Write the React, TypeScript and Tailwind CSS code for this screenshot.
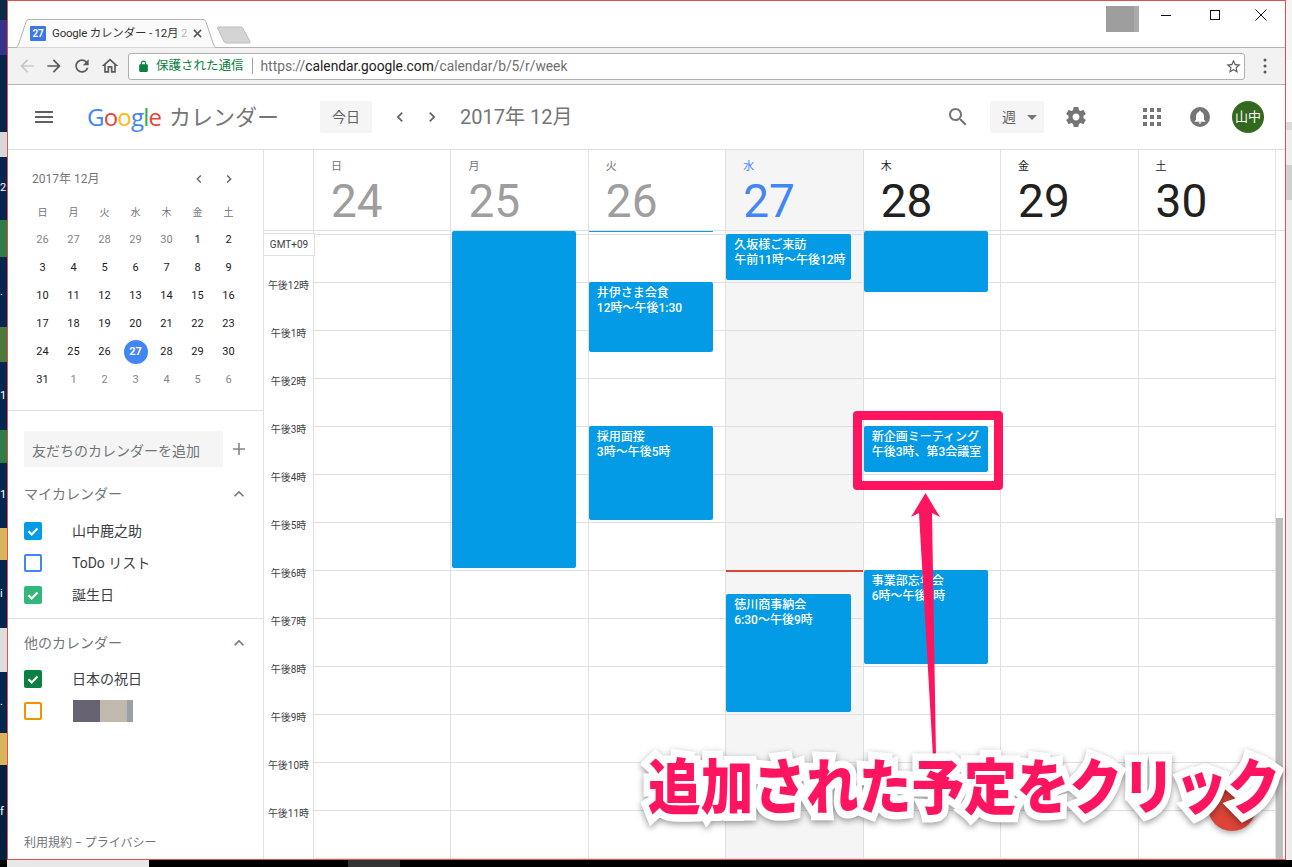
import React from 'react';

const desktopStrip = [
  { h: 20, bg: 'bg-[#0a2a4a]', t: '' },
  { h: 35, bg: 'bg-[#35338a]', t: '' },
  { h: 77, bg: 'bg-[#07244a]', t: '' },
  { h: 25, bg: 'bg-[#d8d8d8]', t: '' },
  { h: 63, bg: 'bg-[#06264f]', t: '2' },
  { h: 37, bg: 'bg-[#2e7d46]', t: '' },
  { h: 70, bg: 'bg-[#06264f]', t: '.' },
  { h: 35, bg: 'bg-[#4b7a3c]', t: '' },
  { h: 68, bg: 'bg-[#04264f]', t: '1' },
  { h: 33, bg: 'bg-[#2e7d46]', t: '' },
  { h: 65, bg: 'bg-[#04264f]', t: '1' },
  { h: 32, bg: 'bg-[#d8b45a]', t: '' },
  { h: 68, bg: 'bg-[#04264f]', t: 'i' },
  { h: 44, bg: 'bg-[#dddddd]', t: '' },
  { h: 61, bg: 'bg-[#04264f]', t: '.' },
  { h: 32, bg: 'bg-[#d8b45a]', t: '' },
  { h: 95, bg: 'bg-[#04203f]', t: 'f' },
];

const miniCal = [
  ['26', '27', '28', '29', '30', '1', '2'],
  ['3', '4', '5', '6', '7', '8', '9'],
  ['10', '11', '12', '13', '14', '15', '16'],
  ['17', '18', '19', '20', '21', '22', '23'],
  ['24', '25', '26', '27', '28', '29', '30'],
  ['31', '1', '2', '3', '4', '5', '6'],
];

const weekdays = ['日', '月', '火', '水', '木', '金', '土'];

const hours = ['午後12時', '午後1時', '午後2時', '午後3時', '午後4時', '午後5時', '午後6時', '午後7時', '午後8時', '午後9時', '午後10時', '午後11時'];

interface CalEvent {
  top: number;
  height: number;
  title?: string;
  time?: string;
}

const days: { wd: string; num: string; wdClass: string; numClass: string; bg: string; evClass: string; events: CalEvent[] }[] = [
  { wd: '日', num: '24', wdClass: 'text-[#70757a]', numClass: 'text-[#9e9e9e]', bg: 'bg-white', evClass: 'left-0 w-[124px]', events: [] },
  { wd: '月', num: '25', wdClass: 'text-[#70757a]', numClass: 'text-[#9e9e9e]', bg: 'bg-white', evClass: 'left-px w-[124px]', events: [{ top: 0, height: 337 }] },
  {
    wd: '火', num: '26', wdClass: 'text-[#70757a]', numClass: 'text-[#9e9e9e]', bg: 'bg-white', evClass: 'left-0 w-[124px]',
    events: [
      { top: 0, height: 1 },
      { top: 51, height: 70, title: '井伊さま会食', time: '12時〜午後1:30' },
      { top: 195, height: 94, title: '採用面接', time: '3時〜午後5時' },
    ],
  },
  {
    wd: '水', num: '27', wdClass: 'text-[#4285f4]', numClass: 'text-[#4285f4]', bg: 'bg-[#f5f5f5]', evClass: 'left-0 w-[125px]',
    events: [
      { top: 3, height: 46, title: '久坂様ご来訪', time: '午前11時〜午後12時' },
      { top: 363, height: 118, title: '徳川商事納会', time: '6:30〜午後9時' },
    ],
  },
  {
    wd: '木', num: '28', wdClass: 'text-[#212121]', numClass: 'text-[#212121]', bg: 'bg-white', evClass: 'left-0 w-[124px]',
    events: [
      { top: 0, height: 61 },
      { top: 195, height: 46, title: '新企画ミーティング', time: '午後3時、第3会議室' },
      { top: 339, height: 94, title: '事業部忘年会', time: '6時〜午後9時' },
    ],
  },
  { wd: '金', num: '29', wdClass: 'text-[#212121]', numClass: 'text-[#212121]', bg: 'bg-white', evClass: 'left-0 w-[124px]', events: [] },
  { wd: '土', num: '30', wdClass: 'text-[#212121]', numClass: 'text-[#212121]', bg: 'bg-white', evClass: 'left-0 w-[124px]', events: [] },
];

const MdIcon = ({ d, className }: { d: string; className: string }) => (
  <svg viewBox="0 0 24 24" className={className} fill="currentColor">
    <path d={d} />
  </svg>
);

const ICONS = {
  back: 'M20 11H7.83l5.59-5.59L12 4l-8 8 8 8 1.41-1.41L7.83 13H20v-2z',
  forward: 'M12 4l-1.41 1.41L16.17 11H4v2h12.17l-5.58 5.59L12 20l8-8z',
  reload: 'M17.65 6.35C16.2 4.9 14.21 4 12 4c-4.42 0-7.99 3.58-7.99 8s3.57 8 7.99 8c3.73 0 6.84-2.55 7.73-6h-2.08c-.82 2.33-3.04 4-5.65 4-3.31 0-6-2.69-6-6s2.69-6 6-6c1.66 0 3.14.69 4.22 1.78L13 11h7V4l-2.35 2.35z',
  home: 'M12 5.69l5 4.5V18h-2v-6H9v6H7v-7.81l5-4.5M12 3L2 12h3v8h6v-6h2v6h6v-8h3L12 3z',
  lock: 'M18 8h-1V6c0-2.76-2.24-5-5-5S7 3.24 7 6v2H6c-1.1 0-2 .9-2 2v10c0 1.1.9 2 2 2h12c1.1 0 2-.9 2-2V10c0-1.1-.9-2-2-2zM9 6c0-1.66 1.34-3 3-3s3 1.34 3 3v2H9V6z',
  star: 'M22 9.24l-7.19-.62L12 2 9.19 8.63 2 9.24l5.46 4.73L5.82 21 12 17.27 18.18 21l-1.63-7.03L22 9.24zM12 15.4l-3.76 2.27 1-4.28-3.32-2.88 4.38-.38L12 6.1l1.71 4.04 4.38.38-3.32 2.88 1 4.28L12 15.4z',
  search: 'M15.5 14h-.79l-.28-.27C15.41 12.59 16 11.11 16 9.5 16 5.91 13.09 3 9.5 3S3 5.91 3 9.5 5.91 16 9.5 16c1.61 0 3.09-.59 4.23-1.57l.27.28v.79l5 4.99L20.49 19l-4.99-5zm-6 0C7.01 14 5 11.99 5 9.5S7.01 5 9.5 5 14 7.01 14 9.5 11.99 14 9.5 14z',
  gear: 'M19.43 12.98c.04-.32.07-.64.07-.98s-.03-.66-.07-.98l2.11-1.65c.19-.15.24-.42.12-.64l-2-3.46c-.12-.22-.39-.3-.61-.22l-2.49 1c-.52-.4-1.08-.73-1.69-.98l-.38-2.65C14.46 2.18 14.25 2 14 2h-4c-.25 0-.46.18-.49.42l-.38 2.65c-.61.25-1.17.59-1.69.98l-2.49-1c-.23-.09-.49 0-.61.22l-2 3.46c-.13.22-.07.49.12.64l2.11 1.65c-.04.32-.07.65-.07.98s.03.66.07.98l-2.11 1.65c-.19.15-.24.42-.12.64l2 3.46c.12.22.39.3.61.22l2.49-1c.52.4 1.08.73 1.69.98l.38 2.65c.03.24.24.42.49.42h4c.25 0 .46-.18.49-.42l.38-2.65c.61-.25 1.17-.59 1.69-.98l2.49 1c.23.09.49 0 .61-.22l2-3.46c.12-.22.07-.49-.12-.64l-2.11-1.65zM12 15.5c-1.93 0-3.5-1.57-3.5-3.5s1.57-3.5 3.5-3.5 3.5 1.57 3.5 3.5-1.57 3.5-3.5 3.5z',
  bell: 'M12 22c1.1 0 2-.9 2-2h-4c0 1.1.89 2 2 2zm6-6v-5c0-3.07-1.64-5.64-4.5-6.32V4c0-.83-.67-1.5-1.5-1.5s-1.5.67-1.5 1.5v.68C7.63 5.36 6 7.92 6 11v5l-2 2v1h16v-1l-2-2z',
  chevLeft: 'M15.41 7.41L14 6l-6 6 6 6 1.41-1.41L10.83 12z',
  chevRight: 'M10 6L8.59 7.41 13.17 12l-4.58 4.59L10 18l6-6z',
  chevUp: 'M12 8l-6 6 1.41 1.41L12 10.83l4.59 4.58L18 14z',
};

const CheckRow = ({ box, checked, label }: { box: string; checked: boolean; label: React.ReactNode }) => (
  <div className="flex items-center h-8 pl-4">
    <div className={`w-[18px] h-[18px] rounded-[2px] flex items-center justify-center ${box}`}>
      {checked && (
        <svg viewBox="0 0 18 18" className="w-[18px] h-[18px]" fill="none" stroke="white" strokeWidth="2.2">
          <path d="M4.5 9.2l3.2 3.2 5.8-6" />
        </svg>
      )}
    </div>
    <div className="ml-[30px] text-[14px] text-[#3c4043] leading-5">{label}</div>
  </div>
);

const SectionHead = ({ title }: { title: string }) => (
  <div className="flex items-center h-5 pl-4 pr-[14px]">
    <span className="text-[14px] text-[#70757a]">{title}</span>
    <MdIcon d={ICONS.chevUp} className="w-5 h-5 ml-auto text-[#70757a]" />
  </div>
);

const Sidebar = () => (
  <aside className="w-[256px] shrink-0 border-r border-[#e0e0e0] flex flex-col bg-white">
    <div className="flex items-center h-5 mt-[19px] pl-6 text-[12px] text-[#70757a]">
      <span>2017年 12月</span>
      <MdIcon d={ICONS.chevLeft} className="w-4 h-4 ml-[92px] text-[#616161]" />
      <MdIcon d={ICONS.chevRight} className="w-4 h-4 ml-[14px] text-[#616161]" />
    </div>
    <div className="ml-[19px] w-[217px] mt-[10px]">
      <div className="grid grid-cols-7 h-[27px] items-center text-center text-[10px] text-[#70757a]">
        {weekdays.map((w) => (
          <span key={w}>{w}</span>
        ))}
      </div>
      {miniCal.map((row, r) => (
        <div key={r} className="grid grid-cols-7 h-7 items-center justify-items-center text-[11px]">
          {row.map((n, c) => {
            const muted = (r === 0 && c < 5) || (r === 5 && c > 0);
            const today = r === 4 && c === 3;
            return (
              <span
                key={c}
                className={
                  today
                    ? 'w-6 h-6 rounded-full bg-[#4285f4] text-white font-bold flex items-center justify-center'
                    : muted
                      ? 'text-[#80868b]'
                      : 'text-[#212121]'
                }
              >
                {n}
              </span>
            );
          })}
        </div>
      ))}
    </div>
    <div className="mt-4 border-t border-[#e0e0e0]" />
    <div className="flex items-center mt-5 pl-4">
      <div className="w-[199px] h-9 bg-[#f5f5f5] rounded-[2px] pl-2 pt-1 flex items-center text-[14px] text-[#70757a]">友だちのカレンダーを追加</div>
      <svg viewBox="0 0 14 14" className="w-[14px] h-[14px] ml-[9px] text-[#80868b]" fill="none" stroke="currentColor" strokeWidth="1.6">
        <path d="M7 1v12M1 7h12" />
      </svg>
    </div>
    <div className="mt-[17px]">
      <SectionHead title="マイカレンダー" />
    </div>
    <div className="mt-[11px]">
      <CheckRow box="bg-[#039be5]" checked label="山中鹿之助" />
      <CheckRow box="border-2 border-[#4285f4]" checked={false} label="ToDo リスト" />
      <CheckRow box="bg-[#33b679]" checked label="誕生日" />
    </div>
    <div className="mt-[7px] border-t border-[#e0e0e0]" />
    <div className="mt-[14px]">
      <SectionHead title="他のカレンダー" />
    </div>
    <div className="mt-[10px]">
      <CheckRow box="bg-[#0b8043]" checked label="日本の祝日" />
      <CheckRow
        box="border-2 border-[#f09300]"
        checked={false}
        label={
          <div className="flex h-[22px] w-[60px] ml-px">
            <div className="w-[27px] bg-[#676372]" />
            <div className="w-[27px] bg-[#c1b9ae]" />
            <div className="w-[6px] bg-[#9aa0a6]" />
          </div>
        }
      />
    </div>
    <div className="mt-auto mb-[6px] pl-4 h-5 flex items-center text-[12px] text-[#70757a]">利用規約 − プライバシー</div>
  </aside>
);

const TimeColumn = () => (
  <div className="w-[50px] shrink-0 border-r border-[#e0e0e0] relative z-10">
    <div className="mt-[2px] w-[51px] h-[23px] bg-white border-y border-r border-[#e0e0e0] flex items-center justify-center text-[10px] text-[#3c4043]">GMT+09</div>
    <div className="mt-[5px]">
      {hours.map((h) => (
        <div key={h} className="h-12 flex items-center justify-center text-[10px] text-[#3c4043]">
          {h}
        </div>
      ))}
    </div>
  </div>
);

const DayColumn = ({ day, showNow }: { day: (typeof days)[number]; showNow: boolean }) => (
  <div className={`flex-1 relative border-r border-[#e0e0e0] overflow-hidden ${day.bg}`}>
    <div className="h-[4px] border-b border-[#e0e0e0]" />
    {hours.concat(['', '', '']).map((_, i) => (
      <div key={i} className="h-12 border-b border-[#e0e0e0]" />
    ))}
    {showNow && <div className="absolute left-0 right-0 top-[339px] h-[2px] bg-[#db4437]" />}
    {day.events.map((ev, i) => (
      <div
        key={i}
        className={`absolute ${day.evClass} bg-[#039be5] rounded-[2px] text-white text-[12px] leading-[15px] font-medium whitespace-nowrap overflow-hidden ${ev.title ? 'pl-2 pt-1' : ''}`}
        style={{ top: ev.top, height: ev.height }}
      >
        {ev.title && <div>{ev.title}</div>}
        {ev.time && <div>{ev.time}</div>}
      </div>
    ))}
  </div>
);

export default function App() {
  return (
    <div className="relative flex w-[1292px] h-[867px] overflow-hidden bg-black font-['Roboto','Noto_Sans_CJK_JP',sans-serif]">
      {/* desktop behind the browser window */}
      <div className="w-[7px] shrink-0 overflow-hidden">
        {desktopStrip.map((s, i) => (
          <div key={i} className={`${s.bg} text-white text-[11px] whitespace-nowrap flex items-center overflow-hidden`} style={{ height: s.h }}>
            {s.t}
          </div>
        ))}
      </div>

      <div className="flex-1 flex flex-col min-w-0">
        <div className="flex h-[860px]">
          <div className="w-[1279px] shrink-0 border border-[#e05050] bg-white flex flex-col overflow-hidden">
            {/* tab strip */}
            <div className="h-[47px] shrink-0 flex items-end border-b border-[#b3b3b3] bg-white">
              <div className="relative ml-[6px] w-[204px] h-[29px] -mb-px flex items-center pl-4 text-[11.5px] tracking-[-0.2px] text-[#333] whitespace-nowrap">
                <svg viewBox="0 0 204 29" className="absolute inset-0 w-[204px] h-[29px]" fill="none">
                  <path d="M0 28.5h1C3 28.5 4 27 5 24L12 3c.6-1.700 1.600-2.500 3-2.500h174c1.400 0 2.400.8 3 2.500l7 21c1 3 2 4.500 4 4.500h1" fill="#fafafa" stroke="#b3b3b3" />
                </svg>
                <div className="relative w-4 h-[15px] bg-[#3b78e7] rounded-[1px] text-white text-[10px] font-bold flex items-center justify-center mr-[6px]">27</div>
                <span className="relative w-[135px] overflow-hidden">Google カレンダー - 12月 <span className="text-[#bbb]">2</span></span>
                <svg viewBox="0 0 10 10" className="relative w-[9px] h-[9px] ml-[6px]" stroke="#5a5a5a" strokeWidth="1.700">
                  <path d="M1 1l8 8M9 1l-8 8" />
                </svg>
              </div>
              <svg viewBox="0 0 34 18" className="w-[34px] h-[18px] mb-[3px] -ml-px" fill="#d4d4d4" stroke="#bdbdbd">
                <path d="M1 1h23c1 0 1.500.5 2 1.500l7 13c.3 1 0 1.500-1 1.500H9c-1 0-1.500-.5-2-1.500L.5 2C.2 1.400.4 1 1 1z" />
              </svg>
              <div className="ml-auto self-start flex items-start">
                <div className="mt-[5px] w-[33px] h-[26px] flex">
                  <div className="w-7 bg-[#9e9e9e]" />
                  <div className="w-[5px] bg-[#ababab]" />
                </div>
                <svg viewBox="0 0 12 12" className="w-3 h-3 mt-2 ml-[21px]" stroke="#111" strokeWidth="1">
                  <path d="M1 6.500h10" />
                </svg>
                <svg viewBox="0 0 12 12" className="w-3 h-3 mt-2 ml-[37px]" stroke="#111" strokeWidth="1" fill="none">
                  <rect x="1.500" y="1.500" width="9" height="9" />
                </svg>
                <svg viewBox="0 0 12 12" className="w-3 h-3 mt-2 ml-[34px] mr-[18px]" stroke="#111" strokeWidth="1">
                  <path d="M.5.5l11 11M11.500.5l-11 11" />
                </svg>
              </div>
            </div>

            {/* toolbar */}
            <div className="h-[37px] shrink-0 flex items-center bg-[#f2f2f2] border-b border-[#b3b3b3]">
              <MdIcon d={ICONS.back} className="w-5 h-5 ml-[9px] text-[#c8c8c8]" />
              <MdIcon d={ICONS.forward} className="w-5 h-5 ml-[7px] text-[#5a5a5a]" />
              <MdIcon d={ICONS.reload} className="w-5 h-5 ml-2 text-[#5a5a5a]" />
              <MdIcon d={ICONS.home} className="w-5 h-5 ml-2 text-[#5a5a5a]" />
              <div className="ml-2 flex-1 h-[27px] bg-white border border-[#b0b0b0] rounded-[3px] flex items-center text-[13.8px] whitespace-nowrap">
                <MdIcon d={ICONS.lock} className="w-[13px] h-[13px] ml-2 text-[#0b8043]" />
                <span className="ml-[6px] text-[#0b8043] text-[12.500px]">保護された通信</span>
                <span className="ml-2 w-px h-4 bg-[#9e9e9e]" />
                <span className="ml-2 text-[#6f6f6f]">
                  https://<span className="text-[#212121]">calendar.google.com</span>/calendar/b/5/r/week
                </span>
                <MdIcon d={ICONS.star} className="w-[17px] h-[17px] ml-auto mr-[2px] text-[#5a5a5a]" />
              </div>
              <div className="w-10 flex justify-center">
                <svg viewBox="0 0 4 16" className="w-1 h-4" fill="#5a5a5a">
                  <circle cx="2" cy="2" r="1.500" />
                  <circle cx="2" cy="8" r="1.500" />
                  <circle cx="2" cy="14" r="1.500" />
                </svg>
              </div>
            </div>

            {/* calendar app bar */}
            <div className="h-[65px] shrink-0 flex items-center border-b border-[#e0e0e0] bg-white">
              <svg viewBox="0 0 18 12" className="w-[18px] h-3 ml-[27px]" fill="#616161">
                <path d="M0 0h18v2H0zM0 5h18v2H0zM0 10h18v2H0z" />
              </svg>
              <span className="ml-[34px] w-[74px] text-[24px] leading-none tracking-[-0.8px] font-['Open_Sans',sans-serif] whitespace-nowrap">
                <span className="text-[#4285f4]">G</span>
                <span className="text-[#ea4335]">o</span>
                <span className="text-[#fbbc05]">o</span>
                <span className="text-[#4285f4]">g</span>
                <span className="text-[#34a853]">l</span>
                <span className="text-[#ea4335]">e</span>
              </span>
              <span className="ml-2 text-[22px] text-[#757575]">カレンダー</span>
              <div className="ml-[41px] w-[52px] h-8 bg-[#f5f5f5] rounded-[2px] flex items-center justify-center text-[14px] text-[#616161]">今日</div>
              <MdIcon d={ICONS.chevLeft} className="w-5 h-5 ml-[18px] text-[#616161]" />
              <MdIcon d={ICONS.chevRight} className="w-5 h-5 ml-3 text-[#616161]" />
              <span className="ml-[18px] text-[20px] text-[#757575]">2017年 12月</span>
              <div className="ml-auto flex items-center pr-[21px]">
                <MdIcon d={ICONS.search} className="w-6 h-6 text-[#757575]" />
                <div className="ml-5 w-[54px] h-8 bg-[#f5f5f5] rounded-[2px] flex items-center pl-3 text-[14px] text-[#616161]">
                  週
                  <svg viewBox="0 0 10 5" className="w-[10px] h-[5px] ml-[11px]" fill="#757575">
                    <path d="M0 0h10L5 5z" />
                  </svg>
                </div>
                <MdIcon d={ICONS.gear} className="w-6 h-6 ml-5 text-[#757575]" />
                <svg viewBox="0 0 18 18" className="w-[18px] h-[18px] ml-[55px]" fill="#757575">
                  <path d="M0 0h4v4H0zM7 0h4v4H7zM14 0h4v4h-4zM0 7h4v4H0zM7 7h4v4H7zM14 7h4v4h-4zM0 14h4v4H0zM7 14h4v4H7zM14 14h4v4h-4z" />
                </svg>
                <div className="ml-[29px] w-5 h-5 rounded-full bg-[#757575] flex items-center justify-center">
                  <MdIcon d={ICONS.bell} className="w-4 h-4 text-white" />
                </div>
                <div className="ml-[22px] w-8 h-8 rounded-full bg-[#33691e] flex items-center justify-center text-[13px] text-white">山中</div>
              </div>
            </div>

            <div className="flex-1 flex min-h-0">
              <Sidebar />
              <div className="flex-1 flex flex-col min-w-0">
                <div className="flex h-[81px] shrink-0 border-b border-[#e0e0e0]">
                  <div className="w-[50px] shrink-0 border-r border-[#e0e0e0]" />
                  <div className="flex-1 flex min-w-0">
                    {days.map((d) => (
                      <div key={d.num} className={`flex-1 border-r border-[#e0e0e0] pl-[17px] pt-[8px] ${d.bg}`}>
                        <div className={`text-[11px] leading-[18px] ${d.wdClass}`}>{d.wd}</div>
                        <div className={`text-[46px] leading-[50px] ${d.numClass}`}>{d.num}</div>
                      </div>
                    ))}
                  </div>
                  <div className="w-[9px] shrink-0" />
                </div>
                <div className="flex-1 flex min-h-0 overflow-hidden">
                  <TimeColumn />
                  <div className="flex-1 flex min-w-0">
                    {days.map((d) => (
                      <DayColumn key={d.num} day={d} showNow={d.num === '27'} />
                    ))}
                  </div>
                  <div className="w-[9px] shrink-0 flex flex-col">
                    <div className="h-[287px] shrink-0" />
                    <div className="flex-1 w-[7px] bg-[#bdbdbd]" />
                  </div>
                </div>
              </div>
            </div>
          </div>
          <div className="flex-1 flex flex-col">
            <div className="h-[60px] bg-[#f4f4f4]" />
            <div className="h-[62px] bg-[#fafafa]" />
            <div className="h-[8px] bg-[#dcdcdc]" />
            <div className="h-[35px] bg-[#eeeeee]" />
            <div className="h-[35px] bg-[#d0d0d0]" />
            <div className="flex-1 bg-[#ececec]" />
          </div>
        </div>
        <div className="h-[7px] flex">
          <div className="w-[142px] bg-[#e8e8e8]" />
          <div className="w-[199px]" />
          <div className="w-[52px] bg-[#333333]" />
        </div>
      </div>

      {/* screenshot annotation */}
      <div className="absolute left-[1208px] top-[783px] w-12 h-12 rounded-full bg-[#db4437] shadow-[0_2px_6px_rgba(0,0,0,0.35)]" />
      <div className="absolute left-[853px] top-[411px] w-[150px] h-[79px] border-[9px] border-[#ff1460] rounded-[4px]" />
      <svg viewBox="0 0 1292 867" className="absolute inset-0 w-[1292px] h-[867px] pointer-events-none">
        <polygon points="925.5,493 940,517 932,513 936,757 933,757 919,513 911,517" fill="#ff1460" />
      </svg>
      <div className="absolute left-[648px] top-[745px] whitespace-nowrap text-[52.700px] leading-[76px] font-black text-[#ff1460] font-['Noto_Sans_CJK_JP',sans-serif] [-webkit-text-stroke:13px_white] [paint-order:stroke_fill] scale-y-[1.15] drop-shadow-[0_2px_3px_rgba(0,0,0,0.4)]">
        追加された予定をクリック
      </div>
    </div>
  );
}
